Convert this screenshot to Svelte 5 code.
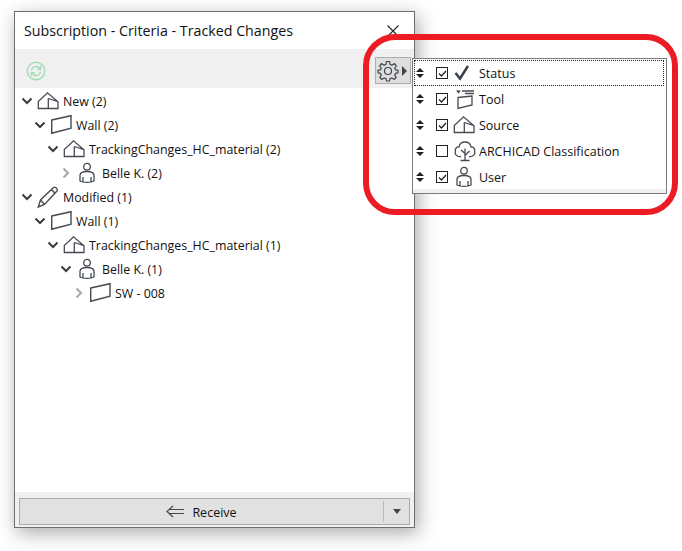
<script>
  const tree = [
    { label: 'New (2)', icon: 'source', level: 0, open: true },
    { label: 'Wall (2)', icon: 'wall', level: 1, open: true },
    { label: 'TrackingChanges_HC_material (2)', icon: 'source', level: 2, open: true },
    { label: 'Belle K. (2)', icon: 'user', level: 3, open: false },
    { label: 'Modified (1)', icon: 'pencil', level: 0, open: true },
    { label: 'Wall (1)', icon: 'wall', level: 1, open: true },
    { label: 'TrackingChanges_HC_material (1)', icon: 'source', level: 2, open: true },
    { label: 'Belle K. (1)', icon: 'user', level: 3, open: true },
    { label: 'SW - 008', icon: 'wall', level: 4, open: false }
  ];
  const options = [
    { label: 'Status', icon: 'check', on: true, focus: true },
    { label: 'Tool', icon: 'tool', on: true },
    { label: 'Source', icon: 'source', on: true },
    { label: 'ARCHICAD Classification', icon: 'tree', on: false },
    { label: 'User', icon: 'user', on: true }
  ];
</script>

{#snippet glyph(name)}
  <svg class="glyph" width="24" height="24" viewBox="0 0 24 24" fill="none" stroke="#454b51" stroke-width="1.300">
    {#if name === 'source'}
      <path d="M2.300 19.500V12.500L11.500 3.800 22 12.700V19.500ZM12.300 9.500V19.500M12.300 9.500L22 12.700" />
    {:else if name === 'wall'}
      <path d="M2.700 7L22 2.700V15.300L2.700 20.300Z" stroke-width="1.400" />
    {:else if name === 'user'}
      <circle cx="12" cy="5.700" r="3.300" />
      <path d="M5 20V14.500C5 11.500 8 10.500 12 10.500S19 11.500 19 14.500V20C16 21.800 8 21.800 5 20ZM8 21V16M16 21V16" />
    {:else if name === 'pencil'}
      <path d="M2.300 22L4.500 15 17.500 2.500C19 1.300 22.300 4 21 6L8.500 19.500ZM4.500 15L8.500 19.500M15.500 4.500L19 8.300" stroke-width="1.400" />
    {:else if name === 'check'}
      <path d="M3.500 12L8 17.500 16 5" stroke="#3a4148" stroke-width="2.500" />
    {:else if name === 'tool'}
      <path d="M6 10.500L20 9V18L6 21.500Z" />
      <path d="M4 3.500H9L6.500 6.500Z" fill="#3a4148" stroke="none" />
      <path d="M10 4H22M13 6.500H22" />
    {:else if name === 'tree'}
      <path d="M13 21V9.500M13 14.500L9 11M13 16.500L17.500 12M8.500 21.500H17.500" />
      <path d="M9 17.500C4.500 18 2.500 15 3.500 12.500 2.500 9.500 5 7.500 7 8 7.500 4.500 10.500 3 13 3S18.500 4.500 19 8C21 7.500 23.500 9.500 22.500 12.500 23.500 15 21.500 18 17 17.500" />
    {/if}
  </svg>
{/snippet}

<div class="window">
  <header class="title">
    <span>Subscription - Criteria - Tracked Changes</span>
    <svg class="close" width="12" height="12" viewBox="0 0 12 12" stroke="#222" stroke-width="1.100"><path d="M.5 .5L11.500 11.500M11.500 .5L.5 11.500" /></svg>
  </header>

  <div class="toolbar">
    <svg width="20" height="20" viewBox="0 0 20 20" fill="none" stroke="#a2dcb6" stroke-width="1.400">
      <circle cx="10" cy="10" r="8.700" />
      <path d="M5.500 9.500C5.800 7 8 5.500 10 5.500 11.500 5.500 12.800 6.200 13.800 7.500M14.500 10.500C14.200 13 12 14.500 10 14.500 8.500 14.500 7.200 13.800 6.200 12.500" />
      <path d="M11.300 8.200H14.600V4.800M8.700 11.800H5.400V15.200" />
    </svg>
    <button class="gear" aria-label="Settings">
      <svg width="22" height="22" viewBox="0 0 22 22" fill="none" stroke="#3f454b" stroke-width="1.200">
        <circle cx="11" cy="11" r="3.500" />
        <path d="M9.500 1.500H12.500L13 4.300 15 5.200 17.400 3.600 19.400 5.800 17.700 8 18.500 9.900 21 10.200V12.800L18.500 13.300 17.700 15.200 19.200 17.500 17.200 19.500 15 18 13 18.800 12.500 21H9.500L9 18.800 7 18 4.800 19.500 2.800 17.500 4.300 15.200 3.500 13.300 1 12.800V10.200L3.500 9.900 4.300 8 2.600 5.800 4.600 3.600 7 5.200 9 4.300Z" />
      </svg>
      <i class="right"></i>
    </button>
  </div>

  <ul class="tree">
    {#each tree as row}
      <li class="node" style="padding-left: {row.level * 13}px">
        <svg class="chev" class:shut={!row.open} width="12" height="12" viewBox="0 0 12 12" fill="none" stroke-width="2">
          {#if row.open}
            <path d="M1.500 3.500L6 8 10.500 3.500" />
          {:else}
            <path d="M3.500 1.500L8 6 3.500 10.500" />
          {/if}
        </svg>
        {@render glyph(row.icon)}
        <span class="label">{row.label}</span>
      </li>
    {/each}
  </ul>

  <footer class="foot">
    <button class="receive">
      <span class="main">
        <svg width="18" height="14" viewBox="0 0 18 14" fill="none" stroke="#444a50" stroke-width="1.200">
          <path d="M7 1L1 6.500 7 12M3 4.500H18M3 8.500H18" />
        </svg>
        <span class="recv">Receive</span>
      </span>
      <span class="drop"><i class="down"></i></span>
    </button>
  </footer>
</div>

<div class="popup">
  {#each options as o}
    <div class="opt" class:focus={o.focus}>
      <span class="sort"><i class="up"></i><i class="dn"></i></span>
      <span class="box">
        {#if o.on}
          <svg width="11" height="11" viewBox="0 0 11 11" fill="none" stroke="#222" stroke-width="1.300"><path d="M2 5.500L4.500 8 9 3" /></svg>
        {/if}
      </span>
      {@render glyph(o.icon)}
      <span class="label">{o.label}</span>
    </div>
  {/each}
</div>

<div class="ring"></div>

<style>
  :global(body) {
    background: #fff;
    min-height: 551px;
  }
  .window {
    box-sizing: border-box;
    width: 401px;
    height: 517px;
    margin: 11px 0 0 14px;
    border: 1px solid #6e6e6e;
    background: #fff;
    box-shadow: 3px 5px 18px rgba(0, 0, 0, 0.34);
    display: flex;
    flex-direction: column;
    font-family: "Open Sans", "Noto Sans", sans-serif;
    color: #111;
  }
  .title {
    height: 37px;
    display: flex;
    align-items: center;
    justify-content: space-between;
    padding: 0 15px 0 9px;
    font-size: 14.250px;
    flex: none;
  }
  .toolbar {
    height: 39px;
    flex: none;
    background: #f0f0f0;
    display: flex;
    align-items: center;
    justify-content: space-between;
    padding: 5px 3px 0 11px;
    box-sizing: border-box;
  }
  .gear {
    box-sizing: border-box;
    width: 36px;
    height: 27px;
    padding: 0 0 0 1px;
    border: 1px solid #aeaeae;
    background: #dedede;
    display: flex;
    align-items: center;
    gap: 3px;
    margin-top: -1px;
  }
  .right {
    border-left: 5px solid #444;
    border-top: 5px solid transparent;
    border-bottom: 5px solid transparent;
  }
  .tree {
    list-style: none;
    margin: 0;
    padding: 1px 0 0 6px;
    flex: 1;
  }
  .node {
    height: 24px;
    display: flex;
    align-items: center;
    font-size: 12.400px;
  }
  .chev {
    stroke: #3c3c3c;
    flex: none;
    margin-right: 3px;
  }
  .chev.shut {
    stroke: #a8a8a8;
  }
  .node .glyph {
    margin-right: 3px;
    flex: none;
  }
  .foot {
    flex: none;
    height: 35px;
    background: #f0f0f0;
    padding: 6px 4px 2px;
    box-sizing: border-box;
  }
  .receive {
    box-sizing: border-box;
    width: 100%;
    height: 27px;
    padding: 0;
    border: 1px solid #ababab;
    background: #e1e1e1;
    display: flex;
    align-items: center;
    font: inherit;
    font-size: 12.500px;
    color: #111;
  }
  .main {
    flex: 1;
    display: flex;
    align-items: center;
    justify-content: center;
    gap: 8px;
  }
  .recv {
    padding-top: 2px;
  }
  .drop {
    width: 25px;
    height: 21px;
    border-left: 1px solid #bdbdbd;
    display: flex;
    align-items: center;
    justify-content: center;
  }
  .down {
    border-top: 5px solid #444;
    border-left: 4.500px solid transparent;
    border-right: 4.500px solid transparent;
  }
  .popup {
    position: absolute;
    left: 412px;
    top: 58px;
    box-sizing: border-box;
    width: 255px;
    height: 136px;
    padding: 1px 2px 6px 1px;
    border: 1px solid #7a7a7a;
    background: #fff;
    font-family: "Open Sans", "Noto Sans", sans-serif;
    font-size: 12.500px;
    color: #111;
    box-shadow: inset 0 -4px 0 #f0f0f0;
  }
  .opt {
    box-sizing: border-box;
    height: 26px;
    display: flex;
    align-items: center;
    padding-left: 1px;
    border: 1px solid transparent;
  }
  .opt.focus {
    border: 1px dotted #222;
  }
  .sort {
    width: 8px;
    display: flex;
    flex-direction: column;
    gap: 2px;
    margin-right: 12px;
  }
  .up {
    border-bottom: 4px solid #222;
    border-left: 4px solid transparent;
    border-right: 4px solid transparent;
  }
  .dn {
    border-top: 4px solid #222;
    border-left: 4px solid transparent;
    border-right: 4px solid transparent;
  }
  .box {
    box-sizing: border-box;
    width: 12px;
    height: 12px;
    border: 1px solid #222;
    display: flex;
    align-items: center;
    justify-content: center;
    margin-right: 4px;
    flex: none;
  }
  .box svg {
    flex: none;
  }
  .opt .glyph {
    margin-right: 3px;
    flex: none;
  }
  .ring {
    position: absolute;
    left: 363px;
    top: 34px;
    box-sizing: border-box;
    width: 315px;
    height: 181px;
    border: 6px solid #ed1c24;
    border-radius: 32px;
    pointer-events: none;
  }
</style>
